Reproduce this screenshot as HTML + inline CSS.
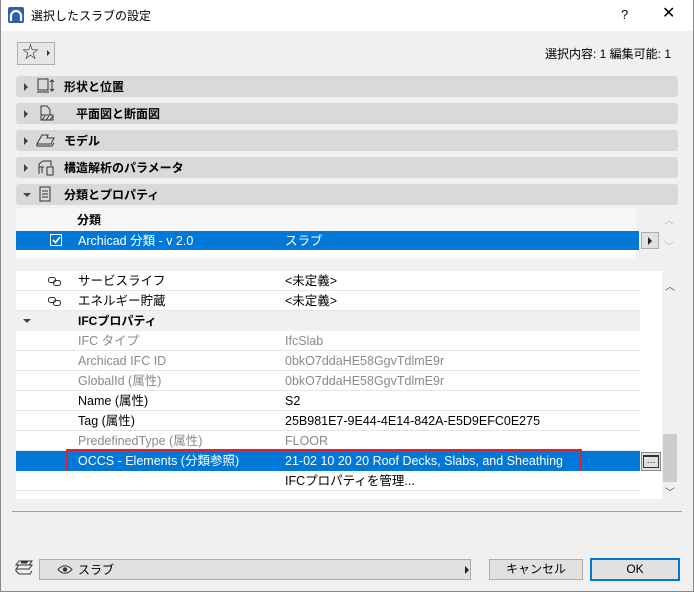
<!DOCTYPE html>
<html><head><meta charset="utf-8"><style>
*{margin:0;padding:0;box-sizing:border-box}
body{width:694px;height:592px;overflow:hidden;background:#f0f0f0;font-family:"Liberation Sans","Noto Sans CJK JP",sans-serif;font-size:12.5px;line-height:14px;color:#000;position:relative}
.a{position:absolute;line-height:14px}
.win{position:absolute;left:0;top:0;width:694px;height:592px;border:1px solid #888;border-top:none}
.title{left:0;top:0;width:694px;height:31px;background:#fff}
.bar{left:16px;width:662px;height:21px;background:#d9d9d9;border-radius:3px}
.bar .t{position:absolute;left:48px;top:4px;font-weight:bold;font-size:12px;line-height:14px}
.tri{position:absolute;left:8px;top:7px;width:0;height:0;border-top:4px solid transparent;border-bottom:4px solid transparent;border-left:4px solid #444}
.trd{position:absolute;width:0;height:0;border-left:4px solid transparent;border-right:4px solid transparent;border-top:4px solid #444}
.row{position:absolute;left:16px;width:624px;height:20px;border-bottom:1px solid #e6e6e6;background:#fff}
.row span{position:absolute;top:3px;line-height:14px;white-space:nowrap}
.n{left:62px}.v{left:269px}
.g{color:#8a8a8a}
.sel{background:#0078d7;color:#fff;border-bottom:none}
.btn{border:1px solid #adadad;background:#e1e1e1;text-align:center;line-height:19px}
</style></head><body>
<div class="a title"></div>
<svg class="a" style="left:8px;top:7px" width="16" height="16"><rect width="16" height="16" rx="2" fill="#2f5fb0"/><path d="M3 14 V9 A5 5 0 0 1 13 9 V14" stroke="#fff" stroke-width="2.2" fill="none"/></svg>
<div class="a" style="left:31px;top:9px;font-size:12px">選択したスラブの設定</div>
<div class="a" style="left:621px;top:8px;font-size:13px">?</div>
<div class="a" style="left:662px;top:7px;font-size:16px">✕</div>
<div class="win"></div>

<div class="a" style="left:17px;top:42px;width:38px;height:23px;border:1px solid #adadad;background:#e6e6e6"></div>
<div class="a" style="left:22px;top:46px;font-size:17px;color:#333">☆</div>
<div class="a" style="left:47px;top:50px;border-top:3px solid transparent;border-bottom:3px solid transparent;border-left:3px solid #333"></div>
<div class="a" style="left:545px;top:47px;font-size:12px">選択内容: 1 編集可能: 1</div>

<div class="a bar" style="top:76px"><div class="tri"></div><svg class="a" style="left:20px;top:2px" width="26" height="17"><rect x="2" y="1" width="10" height="11" fill="none" stroke="#333"/><path d="M1 14h12M16 2v11M14 4l2-2 2 2M14 11l2 2 2-2" stroke="#333" fill="none"/></svg><span class="t">形状と位置</span></div>
<div class="a bar" style="top:103px"><div class="tri"></div><svg class="a" style="left:20px;top:2px" width="26" height="17"><path d="M5 1h6l3 4v5H5z M5 10h12v5H5z" fill="none" stroke="#333"/><path d="M6 15l3-4M10 15l3-4M14 15l3-4" stroke="#333"/></svg><span class="t" style="left:60px">平面図と断面図</span></div>
<div class="a bar" style="top:130px"><div class="tri"></div><svg class="a" style="left:20px;top:3px" width="26" height="15"><path d="M2 9l4-7h6l-1 3h7l-3 6H1z M1 11v2h15l2-3" fill="none" stroke="#333"/></svg><span class="t">モデル</span></div>
<div class="a bar" style="top:157px"><div class="tri"></div><svg class="a" style="left:20px;top:2px" width="26" height="17"><path d="M3 15V5l4-3h8v5M3 8h5M6 8v6" fill="none" stroke="#333"/><rect x="11" y="8" width="6" height="8" fill="none" stroke="#333"/></svg><span class="t">構造解析のパラメータ</span></div>
<div class="a bar" style="top:184px"><div class="trd" style="left:7px;top:9px"></div><svg class="a" style="left:20px;top:2px" width="26" height="17"><rect x="4" y="1" width="10" height="14" fill="none" stroke="#333"/><path d="M6 5h6M6 8h6M6 11h6" stroke="#333"/></svg><span class="t">分類とプロパティ</span></div>

<div class="a" style="left:16px;top:208px;width:620px;height:52px;background:#f6f6f6"></div>
<div class="a" style="left:77px;top:213px;font-weight:bold;font-size:12px">分類</div>
<div class="a" style="left:16px;top:231px;width:623px;height:19px;background:#0078d7"></div>
<div class="a" style="left:50px;top:234px;width:12px;height:12px;border:1px solid #fff"></div>
<svg class="a" style="left:52px;top:236px" width="9" height="8"><path d="M1 4l2.5 2.5L8 1" stroke="#fff" stroke-width="1.6" fill="none"/></svg>
<div class="a" style="left:78px;top:234px;color:#fff">Archicad 分類 - v 2.0</div>
<div class="a" style="left:285px;top:234px;color:#fff">スラブ</div>
<div class="a" style="left:641px;top:232px;width:18px;height:17px;background:#e1e1e1;border:1px solid #adadad"></div>
<div class="a" style="left:648px;top:237px;border-top:4px solid transparent;border-bottom:4px solid transparent;border-left:4px solid #222"></div>
<div class="a" style="left:16px;top:250px;width:620px;height:7px;background:#fff"></div>
<div class="a" style="left:664px;top:215px;color:#bbb;font-size:10px">︿</div>
<div class="a" style="left:664px;top:241px;color:#bbb;font-size:10px">﹀</div>

<div class="a" style="left:16px;top:271px;width:646px;height:228px;background:#fff"></div>
<div class="row" style="top:271px"><svg class="a" style="left:32px;top:6px" width="14" height="9"><rect x="0.5" y="0.5" width="7" height="5" rx="2" fill="none" stroke="#333"/><rect x="5.5" y="3.5" width="7" height="5" rx="2" fill="none" stroke="#333"/></svg><span class="n">サービスライフ</span><span class="v">&lt;未定義&gt;</span></div>
<div class="row" style="top:291px"><svg class="a" style="left:32px;top:6px" width="14" height="9"><rect x="0.5" y="0.5" width="7" height="5" rx="2" fill="none" stroke="#333"/><rect x="5.5" y="3.5" width="7" height="5" rx="2" fill="none" stroke="#333"/></svg><span class="n">エネルギー貯蔵</span><span class="v">&lt;未定義&gt;</span></div>
<div class="row" style="top:311px;background:#f0f0f0;border:none"><div class="trd" style="left:7px;top:8px"></div><span class="n" style="font-weight:bold;font-size:12px">IFCプロパティ</span></div>
<div class="row g" style="top:331px"><span class="n">IFC タイプ</span><span class="v">IfcSlab</span></div>
<div class="row g" style="top:351px"><span class="n">Archicad IFC ID</span><span class="v">0bkO7ddaHE58GgvTdlmE9r</span></div>
<div class="row g" style="top:371px"><span class="n">GlobalId (属性)</span><span class="v">0bkO7ddaHE58GgvTdlmE9r</span></div>
<div class="row" style="top:391px"><span class="n">Name (属性)</span><span class="v">S2</span></div>
<div class="row" style="top:411px"><span class="n">Tag (属性)</span><span class="v">25B981E7-9E44-4E14-842A-E5D9EFC0E275</span></div>
<div class="row g" style="top:431px"><span class="n">PredefinedType (属性)</span><span class="v">FLOOR</span></div>
<div class="row sel" style="top:451px;height:20px"><span class="n">OCCS - Elements (分類参照)</span><span class="v">21-02 10 20 20 Roof Decks, Slabs, and Sheathing</span></div>
<div class="a" style="left:641px;top:452px;width:20px;height:19px;background:#e1e1e1;border:1px solid #888"></div>
<div class="a" style="left:643px;top:455px;width:16px;height:13px;border:1px solid #333;border-top-width:2px;font-size:9px;line-height:7px;text-align:center">…</div>
<div class="a" style="left:66px;top:449px;width:516px;height:26px;border:2px solid #e0202a"></div>
<div class="row" style="top:471px"><span class="v">IFCプロパティを管理...</span></div>
<div class="a" style="left:663px;top:271px;width:15px;height:228px;background:#f0f0f0"></div>
<div class="a" style="left:663px;top:434px;width:14px;height:48px;background:#cdcdcd"></div>
<div class="a" style="left:665px;top:281px;font-size:10px;color:#555">︿</div>
<div class="a" style="left:665px;top:487px;font-size:10px;color:#555">﹀</div>

<div class="a" style="left:12px;top:511px;width:670px;height:1px;background:#a0a0a0"></div>

<svg class="a" style="left:14px;top:559px" width="20" height="18"><path d="M5 2h13l-3 4H2zM5 6h13l-3 4H2zM2 10v2l3 3h11l2-3" fill="none" stroke="#333"/><path d="M7 3h7M7 4h6" stroke="#333"/></svg>
<div class="a btn" style="left:39px;top:559px;width:432px;height:21px;text-align:left"></div>
<svg class="a" style="left:57px;top:564px" width="16" height="11"><path d="M1 5.5Q8 -2 15 5.5Q8 13 1 5.5z" fill="none" stroke="#333"/><circle cx="8" cy="5.5" r="2.2" fill="#333"/></svg>
<div class="a" style="left:78px;top:563px;font-size:12px">スラブ</div>
<div class="a" style="left:465px;top:566px;border-top:4px solid transparent;border-bottom:4px solid transparent;border-left:4px solid #222"></div>
<div class="a btn" style="left:489px;top:559px;width:94px;height:21px;font-size:12px">キャンセル</div>
<div class="a btn" style="left:590px;top:558px;width:90px;height:23px;border:2px solid #0078d7;font-size:12px">OK</div>
</body></html>
